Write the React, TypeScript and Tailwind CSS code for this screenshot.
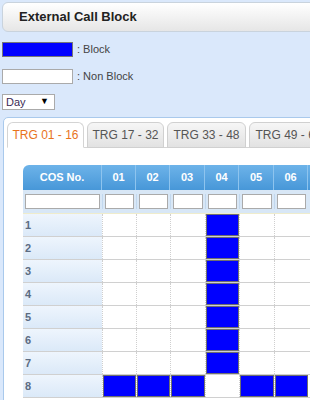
import React from 'react';

const widths = ['w-[34px]', 'w-[34px]', 'w-[35px]', 'w-[34px]', 'w-[35px]', 'w-[34px]'];
const cols = ['01', '02', '03', '04', '05', '06'];
const tabs = [
  { label: 'TRG 01 - 16', w: 'w-[77px]', active: true },
  { label: 'TRG 17 - 32', w: 'w-[77px]' },
  { label: 'TRG 33 - 48', w: 'w-[79px]' },
  { label: 'TRG 49 - 64', w: 'w-[79px]' },
];

// which cells are blocked, row index 0..7, col index 0..5
function isBlocked(r: number, c: number) {
  if (r < 7) return c === 3;
  return c !== 3;
}

export default function App() {
  return (
    <div className="w-[310px] h-[400px] overflow-hidden bg-[#dae8fb] font-['Liberation_Sans',Arial,sans-serif] text-[#333]">
      <div className="pt-[2px] pl-[2px]">
        <div className="w-[340px] h-[30px] rounded-[6px] border border-[#c9d3dd] bg-gradient-to-b from-white to-[#e6e6e6] pl-[16px] flex items-center text-[13px] font-bold text-[#222]">
          External Call Block
        </div>

        <div className="mt-[10px] flex items-center h-[15px]">
          <div className="w-[71px] h-[15px] bg-[#0000ff] border border-[#777]" />
          <span className="ml-[4px] text-[11px] text-[#444]">: Block</span>
        </div>
        <div className="mt-[12px] flex items-center h-[15px]">
          <div className="w-[71px] h-[15px] bg-white border border-[#aaa]" />
          <span className="ml-[4px] text-[11px] text-[#444]">: Non Block</span>
        </div>
        <div className="mt-[10px] w-[53px] h-[16px] bg-white border border-[#aaa] flex items-center justify-between pl-[3px] pr-[5px] text-[11px] text-[#3a2a55]">
          <span>Day</span>
          <span className="text-[9px] text-black">▼</span>
        </div>

        <div className="mt-[7px] ml-[1px] w-[340px] h-[300px] rounded-[5px] border border-[#a9c9ec] bg-white pt-[4px] pl-[3px]">
          <div className="flex gap-[3px] border-b border-[#d4d4d4] h-[26px]">
            {tabs.map((t) => (
              <div
                key={t.label}
                className={
                  t.w +
                  ' h-[26px] rounded-t-[6px] border flex items-center justify-center text-[12px] ' +
                  (t.active
                    ? 'bg-white border-[#d4d4d4] border-b-white text-[#e8731d]'
                    : 'bg-gradient-to-b from-[#f6f6f6] to-[#e2e2e2] border-[#d0d0d0] text-[#555]')
                }
              >
                {t.label}
              </div>
            ))}
          </div>

          <div className="mt-[17px] ml-[16px]">
            <div className="flex h-[25px] rounded-tl-[6px] overflow-hidden bg-gradient-to-b from-[#6db3e9] to-[#4797d8] text-white text-[11px] font-bold">
              <div className="w-[79px] flex items-center justify-center border-r border-[#8ec4ee]">COS No.</div>
              {cols.map((c, i) => (
                <div key={c} className={widths[i] + ' flex items-center justify-center border-r border-[#8ec4ee]'}>
                  {c}
                </div>
              ))}
            </div>

            <div className="flex h-[23px] bg-[#d8e7f6] items-center">
              <div className="w-[79px] px-[2px]">
                <div className="h-[15px] bg-white border border-[#aaa]" />
              </div>
              {cols.map((c, i) => (
                <div key={c} className={widths[i] + ' px-[2px] border-l border-[#c2d8ee]'}>
                  <div className="h-[15px] bg-white border border-[#aaa]" />
                </div>
              ))}
            </div>

            {Array.from({ length: 8 }).map((_, r) => (
              <div key={r} className={'flex h-[23px] border-b border-[#d0d0d0] ' + (r === 0 ? 'border-t border-t-[#efeccc] h-[24px]' : '')}>
                <div className="w-[79px] flex items-center pl-[2px] bg-gradient-to-b from-[#eef5fd] to-[#dbe9f8] text-[11px] font-bold text-[#5c6c82]">
                  {r + 1}
                </div>
                {cols.map((c, i) => (
                  <div key={c} className={widths[i] + ' border-l border-dotted border-[#cfcfcf] bg-white'}>
                    {isBlocked(r, i) && <div className="w-full h-full bg-[#0000ff] border border-[#707070]" />}
                  </div>
                ))}
              </div>
            ))}
          </div>
        </div>
      </div>
    </div>
  );
}
